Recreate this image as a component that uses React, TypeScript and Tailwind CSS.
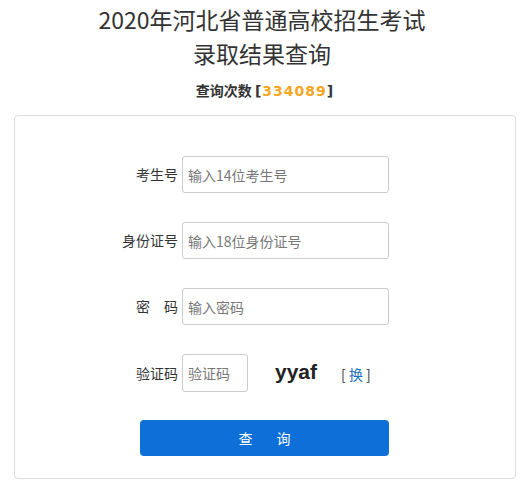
import React from 'react';

const cjk = { fontFamily: '"Noto Sans CJK SC", "Noto Sans", sans-serif' };

const FieldRow: React.FC<{ label: string; placeholder: string; type?: string }> = ({ label, placeholder, type = 'text' }) => (
  <div className="flex items-center ml-[107px]">
    <span className="w-[56px] mr-[4px] text-right text-[14px] text-[#333] whitespace-pre">{label}</span>
    <input
      type={type}
      placeholder={placeholder}
      className="w-[207px] h-[37px] px-[5px] border border-[#ccc] rounded-[3px] text-[14px] text-[#333] placeholder:text-[#777] outline-none"
    />
  </div>
);

export default function App() {
  return (
    <div className="bg-white w-[524px] h-[483px] overflow-hidden" style={cjk}>
      <div className="pt-[2px] text-center text-[23px] leading-[34px] text-[#333]">
        <div>2020年河北省普通高校招生考试</div>
        <div>录取结果查询</div>
      </div>
      <div className="mt-[10px] pl-[6px] text-center text-[14px] leading-[20px] font-bold text-[#333]">
        查询次数{' '}
        <span className="tracking-[1px]" style={{ fontFamily: '"DejaVu Sans", sans-serif' }}>
          [<span className="text-[#f5a623]">334089</span>]
        </span>
      </div>

      <div className="mt-[14px] ml-[14px] w-[502px] h-[364px] border border-[#ddd] rounded-[4px] pt-[40px]">
        <div className="flex flex-col gap-[29px]">
          <FieldRow label="考生号" placeholder="输入14位考生号" />
          <FieldRow label="身份证号" placeholder="输入18位身份证号" />
          <FieldRow label="密　码" placeholder="输入密码" type="password" />
          <div className="flex items-center ml-[107px]">
            <span className="w-[56px] mr-[4px] text-right text-[14px] text-[#333]">验证码</span>
            <input
              type="text"
              placeholder="验证码"
              className="w-[66px] h-[38px] px-[5px] border border-[#ccc] rounded-[3px] text-[14px] text-[#333] placeholder:text-[#777] outline-none"
            />
            <span
              className="ml-[27px] text-[21px] font-bold text-[#222] leading-none -mt-[4px]"
              style={{ fontFamily: '"Liberation Sans", Arial, sans-serif' }}
            >
              yyaf
            </span>
            <span className="ml-[24px] text-[14px] text-[#333] mt-[2px]">
              [ <span className="text-[#1b6fc2]">换</span> ]
            </span>
          </div>
        </div>
        <button className="mt-[28px] ml-[125px] w-[249px] h-[36px] rounded-[4px] bg-[#0d6fd7] text-white text-[14px] flex items-center justify-center gap-[24px]">
          <span>查</span>
          <span>询</span>
        </button>
      </div>
    </div>
  );
}
